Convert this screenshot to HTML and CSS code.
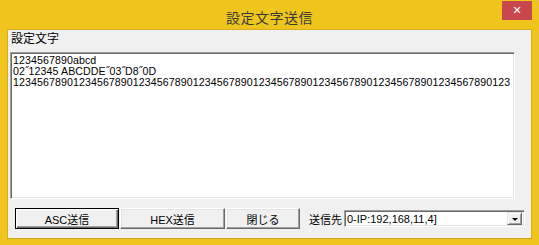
FILE: index.html
```html
<!doctype html>
<html>
    <head>
        <meta charset="utf-8">
        <title>設定文字送信</title>
        <link rel="stylesheet" href="styles.css">
    </head>
    <body>
        <div class="window">
            <div class="titlebar">
                <div class="title">設定文字送信</div>
                <div class="close-btn">&#x2715;</div>
            </div>
            <div class="client">
                <div class="caption">設定文字</div>
                <div class="edit">
                    <div class="line">1234567890abcd</div>
                    <div class="line">02˝12345 ABCDDE˝03˝D8˝0D</div>
                    <div class="line">12345678901234567890123456789012345678901234567890123456789012345678901234567890123</div>
                </div>
                <div class="footer">
                    <button class="btn default btn-asc">ASC送信</button>
                    <button class="btn btn-hex">HEX送信</button>
                    <button class="btn btn-close">閉じる</button>
                    <span class="dest-label">送信先</span>
                    <div class="combo">
                        <span class="combo-text">0-IP:192,168,11,4]</span>
                        <span class="combo-arrow"></span>
                    </div>
                </div>
            </div>
        </div>
    </body>
</html>
```

FILE: styles.css
```css
html, body {
    margin: 0;
    padding: 0;
}
body {
    font-family: "Liberation Sans", "Noto Sans CJK JP", sans-serif;
    background: #EDC21C;
    color: #000;
}
.window {
    width: 539px;
    height: 245px;
    box-sizing: border-box;
    background: #EFC51D;
    display: flex;
    flex-direction: column;
    padding: 0 7px 6px 7px;
}
.titlebar {
    height: 29px;
    position: relative;
    display: flex;
    align-items: center;
    justify-content: center;
}
.title {
    font-family: "Noto Sans CJK JP", sans-serif;
    font-size: 14px;
    color: #3a3a3a;
    margin-top: 4px;
    letter-spacing: 0.5px;
}
.close-btn {
    position: absolute;
    right: 0px;
    top: 1px;
    width: 30px;
    height: 19px;
    background: #C8474D;
    color: #fff;
    font-size: 11px;
    font-weight: bold;
    line-height: 19px;
    text-align: center;
    font-family: "DejaVu Sans", sans-serif;
}
.client {
    flex: 1;
    background: #F0F0F0;
    border: 1px solid #D6AE1A;
    border-bottom-color: #C9A31A;
    display: flex;
    flex-direction: column;
    padding: 0 16px 0 2px;
}
.caption {
    font-family: "Noto Sans CJK JP", sans-serif;
    font-size: 12px;
    line-height: 14px;
    margin: 1px 0 0 1px;
    height: 21px;
}
.edit {
    height: 147px;
    box-sizing: border-box;
    background: #fff;
    border: 1px solid;
    border-color: #A0A0A0 #FFFFFF #FFFFFF #A0A0A0;
    box-shadow: inset 1px 1px 0 #696969, inset -1px -1px 0 #E3E3E3;
    padding: 2px 2px;
    overflow: hidden;
}
.line {
    font-size: 10.6px;
    line-height: 11px;
    letter-spacing: 0.1px;
    white-space: pre;
}
.footer {
    display: flex;
    align-items: center;
    margin-top: 9px;
    padding-left: 5px;
    margin-right: -9px;
}
.btn {
    font-family: "Liberation Sans", "Noto Sans CJK JP", sans-serif;
    font-size: 11px;
    height: 21px;
    padding: 0;
    flex-shrink: 0;
    background: #F0F0F0;
    color: #000;
    border: 1px solid;
    border-color: #FFFFFF #696969 #696969 #FFFFFF;
    box-shadow: inset -1px -1px 0 #A0A0A0, inset 1px 1px 0 #E3E3E3;
    margin-right: 1px;
}
.btn.default {
    border: 1px solid #000;
    box-shadow: inset 1px 1px 0 #fff, inset -1px -1px 0 #696969, inset -2px -2px 0 #A0A0A0;
}
.btn-asc {
    width: 104px;
}
.btn-hex {
    width: 105px;
}
.btn-close {
    width: 74px;
}
.dest-label {
    font-family: "Noto Sans CJK JP", sans-serif;
    font-size: 11px;
    white-space: nowrap;
    flex-shrink: 0;
    margin-left: 8px;
    margin-right: 2px;
}
.combo {
    width: 181px;
    height: 17px;
    flex-shrink: 0;
    box-sizing: border-box;
    background: #fff;
    border: 1px solid;
    border-color: #A0A0A0 #FFFFFF #FFFFFF #A0A0A0;
    box-shadow: inset 1px 1px 0 #696969, inset -1px -1px 0 #E3E3E3;
    display: flex;
    align-items: center;
    padding: 0 2px 0 2px;
}
.combo-text {
    flex: 1;
    font-size: 11px;
}
.combo-arrow {
    width: 15px;
    height: 13px;
    box-sizing: border-box;
    background: #F0F0F0;
    border: 1px solid;
    border-color: #E3E3E3 #696969 #696969 #E3E3E3;
    box-shadow: inset 1px 1px 0 #fff, inset -1px -1px 0 #A0A0A0;
    position: relative;
}
.combo-arrow::after {
    content: "";
    position: absolute;
    left: 4px;
    top: 5px;
    border-left: 3px solid transparent;
    border-right: 3px solid transparent;
    border-top: 3px solid #000;
}
```
